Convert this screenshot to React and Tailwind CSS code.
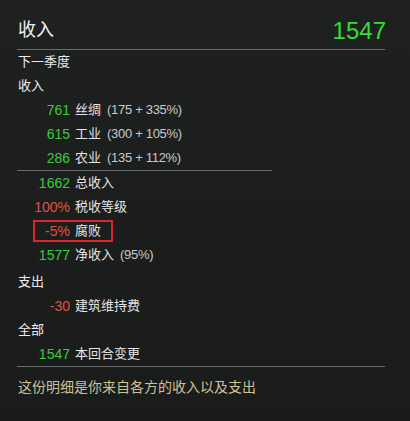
const font = { fontFamily: '"Liberation Sans", "Noto Sans CJK SC", sans-serif' }

function Row({ value, label, extra, tone = 'green', boxed }) {
  const color = tone === 'green' ? 'text-[#3ccb3a]' : 'text-[#e0533a]'
  return (
    <div className="relative flex h-6 items-center">
      <span className={`w-[52px] text-right text-[14px] ${color}`}>{value}</span>
      <span className="ml-[5px] text-[13px] text-[#e4e4e4]">{label}</span>
      {extra && <span className="ml-[6px] text-[13px] tracking-[-0.3px] text-[#c9c9c9]">{extra}</span>}
      {boxed && (
        <span className="absolute left-[15px] top-[1px] h-[22px] w-[80px] border-2 border-[#d9252b]" />
      )}
    </div>
  )
}

function Heading({ children }) {
  return <div className="flex h-6 items-center text-[13px] text-[#ececec]">{children}</div>
}

export default function App() {
  return (
    <div
      style={font}
      className="h-[421px] w-[410px] overflow-hidden bg-gradient-to-b from-[#1f2121] via-[#1c1e1e] to-[#1a1c1c] px-[17px] text-white"
    >
      {/* titre */}
      <div className="flex h-[49px] items-center justify-between pt-[12px]">
        <span className="pl-[1px] text-[18px] text-[#f0f0f0]">收入</span>
        <span className="pr-[7px] text-[24px] text-[#33dd33]">1547</span>
      </div>
      <div className="h-px w-[368px] bg-[#6a6c6c]" />

      <div className="pl-[1px]">
        <Heading>下一季度</Heading>
        <Heading>收入</Heading>
        <Row value="761" label="丝绸" extra="(175 + 335%)" />
        <Row value="615" label="工业" extra="(300 + 105%)" />
        <Row value="286" label="农业" extra="(135 + 112%)" />
      </div>
      <div className="h-px w-[255px] bg-[#6a6c6c]" />

      <div className="pl-[1px]">
        <Row value="1662" label="总收入" />
        <Row value="100%" label="税收等级" tone="red" />
        <Row value="-5%" label="腐败" tone="red" boxed />
        <Row value="1577" label="净收入" extra="(95%)" />
        <div className="h-[3px]" />
        <Heading>支出</Heading>
        <Row value="-30" label="建筑维持费" tone="red" />
        <Heading>全部</Heading>
        <Row value="1547" label="本回合变更" />
      </div>
      <div className="h-px w-[368px] bg-[#6a6c6c]" />

      <div className="flex h-[40px] items-center pl-[1px] text-[14px] text-[#cfc095]">
        这份明细是你来自各方的收入以及支出
      </div>
    </div>
  )
}
